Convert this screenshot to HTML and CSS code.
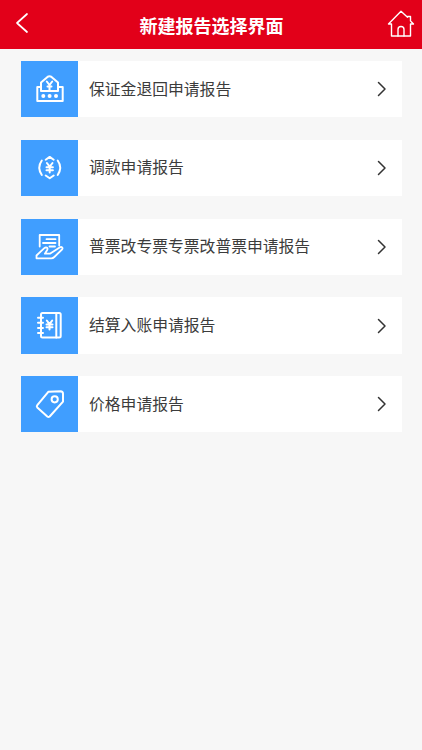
FILE: index.html
```html
<!DOCTYPE html>
<html lang="zh-CN">
<head>
<meta charset="utf-8">
<title>新建报告选择界面</title>
<link rel="stylesheet" href="styles.css">
</head>
<body>
<header class="bar">
  <svg class="back" viewBox="0 0 16 24"><path d="M13 3 3 12l10 9"/></svg>
  <h1 class="title">新建报告选择界面</h1>
  <svg class="home" viewBox="0 0 28 28"><path d="M4.500 15H1.500L14 2.300l6.500 6M24 12.500l2.500 2.500h-3V27h-19V15M20.500 8.300V7.500H23.500V12"/><path d="M11 27v-6.500a3 3 0 0 1 6 0V27"/></svg>
</header>
<main class="list">
  <a class="row">
    <span class="tile"><svg viewBox="0 0 57 57"><path d="M20 26h-3.700v14h25.400V26H37M20 30h17v-8.500l-6.500-5.600q-2-1.500-4 0L20 21.500zM25.800 20.500l2.700 3.500 2.700-3.500M28.500 24v5M26.500 25.500h4"/><g class="solid"><circle cx="22.300" cy="34.900" r="2"/><circle cx="28.600" cy="34.900" r="2"/><circle cx="35" cy="34.900" r="2"/></g></svg></span>
    <span class="label">保证金退回申请报告</span>
    <svg class="arrow" viewBox="0 0 10 16"><path d="m1.500 1.500 6.500 6.500-6.500 6.500"/></svg>
  </a>
  <a class="row">
    <span class="tile"><svg viewBox="0 0 57 57"><path d="M20.800 20.500q-5 7 0 14.500M36.700 20.500q5 7 0 14.500M24.700 19.700l4-2.800 4 2.800M24.700 35.500l4 2.800 4-2.800"/><path d="m25.900 23 2.800 3.700 2.800-3.700M28.700 26.700v5.800M25.500 27.200h6.400M25.500 30.300h6.400"/></svg></span>
    <span class="label">调款申请报告</span>
    <svg class="arrow" viewBox="0 0 10 16"><path d="m1.500 1.500 6.500 6.500-6.500 6.500"/></svg>
  </a>
  <a class="row">
    <span class="tile"><svg viewBox="0 0 57 57"><path class="fine" d="M18.700 27.500V16h19.500v10.500M25.500 20.200h9M22 24h12.500M28.500 27.500H34"/><path class="fine" d="M15.500 39.300v-2.800l7.800-7.300c1.700-1.500 4-.4 3 1.500l-2.400 4h5l9.700-6.200c2.100-1.200 3.900.3 2.400 2L33.300 38q-1.300 1.300-3 1.300z"/></svg></span>
    <span class="label">普票改专票专票改普票申请报告</span>
    <svg class="arrow" viewBox="0 0 10 16"><path d="m1.500 1.500 6.500 6.500-6.500 6.500"/></svg>
  </a>
  <a class="row">
    <span class="tile"><svg viewBox="0 0 57 57"><rect x="20" y="16" width="19.700" height="24.500" rx="1.500"/><path d="M35.300 16v24.500M17 20.800h5M17 25.800h5M17 30.900h5M17 36h5"/><path d="m25.800 23.500 2.700 3.700 2.700-3.700M28.500 27.200v5.300M25.500 27.500h6M25.500 30.200h6"/></svg></span>
    <span class="label">结算入账申请报告</span>
    <svg class="arrow" viewBox="0 0 10 16"><path d="m1.500 1.500 6.500 6.500-6.500 6.500"/></svg>
  </a>
  <a class="row">
    <span class="tile"><svg viewBox="0 0 57 57"><path d="M27.500 15.700 39.500 15.200q2.500 0 2.500 2.500v8L28.700 40.500q-1.200 1-2.400 0l-10-9q-1-1.200 0-2.400z"/><circle cx="33.700" cy="23.300" r="3.100"/></svg></span>
    <span class="label">价格申请报告</span>
    <svg class="arrow" viewBox="0 0 10 16"><path d="m1.500 1.500 6.500 6.500-6.500 6.500"/></svg>
  </a>
</main>
</body>
</html>
```
FILE: styles.css
```css
* { box-sizing: border-box; }
body {
  margin: 0;
  min-height: 750px;
  background: #f7f7f7;
  font-family: "Noto Sans CJK SC", sans-serif;
}
svg {
  fill: none;
  stroke: #fff;
  stroke-linecap: round;
  stroke-linejoin: round;
}
.bar {
  display: flex;
  align-items: center;
  justify-content: space-between;
  height: 49px;
  padding: 0 7px 0 14px;
  background: #e20019;
}
.back { width: 16px; height: 24px; margin: 0 6px 3px 0; stroke-width: 1.700; }
.home { width: 28px; height: 28px; margin-bottom: 4px; stroke-width: 1.400; }
.title {
  margin: 0;
  color: #fff;
  font-size: 18px;
  font-weight: 700;
  line-height: 26px;
}
.list {
  display: flex;
  flex-direction: column;
  gap: 22.500px;
  padding: 12px 20px 0 21px;
}
.row {
  display: flex;
  align-items: center;
  height: 56.300px;
  padding-right: 15px;
  background: #fff;
}
.tile { width: 57px; height: 100%; background: #409eff; }
.tile svg { display: block; width: 57px; height: 57px; stroke-width: 2; }
.tile .fine { stroke-width: 1.800; }
.tile .solid { fill: #fff; stroke: none; }
.label {
  flex: 1;
  margin: 0 0 1px 11px;
  color: #3c3c3c;
  font-size: 15.800px;
  font-weight: 400;
  line-height: 24px;
}
.arrow { width: 10px; height: 16px; stroke: #333; stroke-width: 1.500; }
```
